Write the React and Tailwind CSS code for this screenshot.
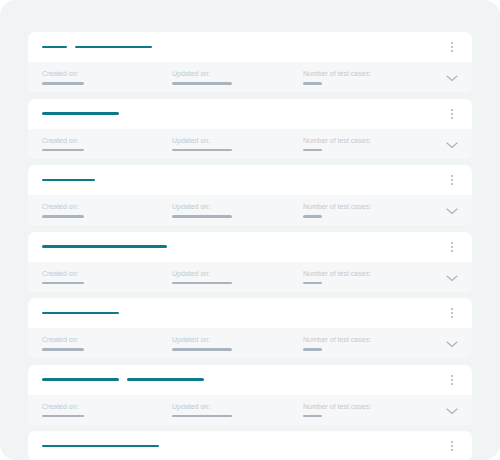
import React from "react";

const cards = [
  [25, 77],
  [77],
  [53],
  [125],
  [77],
  [77, 77],
  [117],
];

function Kebab() {
  return (
    <svg width="4" height="12" viewBox="0 0 4 12" className="block">
      <circle cx="2" cy="2" r="0.9" fill="#9ea8b3" />
      <circle cx="2" cy="6" r="0.9" fill="#9ea8b3" />
      <circle cx="2" cy="10" r="0.9" fill="#9ea8b3" />
    </svg>
  );
}

function Chevron() {
  return (
    <svg width="12" height="7" viewBox="0 0 12 7" className="block">
      <path d="M1 1 L6 5.5 L11 1" fill="none" stroke="#a9b2bc" strokeWidth="1.1" strokeLinecap="round" strokeLinejoin="round" />
    </svg>
  );
}

function Field({ label, bar, className }) {
  return (
    <div className={"flex flex-col gap-[4px] " + className}>
      <span className="text-[7px] leading-[8px] text-[#c3c9cf]">{label}</span>
      <div className="h-[2.5px] rounded-full bg-[#a9b4be]" style={{ width: bar }} />
    </div>
  );
}

function Card({ bars, footer }) {
  return (
    <div className="shrink-0 rounded-[7px] overflow-hidden bg-white">
      <div className="h-[30px] flex items-center pl-[14px] pr-[18px]">
        <div className="flex items-center gap-[8px] flex-1">
          {bars.map((w, i) => (
            <div key={i} className="h-[2.7px] rounded-full bg-[#0d7a8b]" style={{ width: w }} />
          ))}
        </div>
        <Kebab />
      </div>
      {footer && (
        <div className="h-[30px] bg-[#f6f7f8] flex items-start pt-[8px] pl-[14px] pr-[14px]">
          <Field label="Created on:" bar={42} className="w-[130px]" />
          <Field label="Updated on:" bar={60} className="w-[131px]" />
          <Field label="Number of test cases:" bar={19} className="flex-1" />
          <div className="pt-[5px]">
            <Chevron />
          </div>
        </div>
      )}
    </div>
  );
}

export default function App() {
  return (
    <div className="w-[500px] h-[460px] bg-white" style={{ fontFamily: '"Liberation Sans", Arial, sans-serif' }}>
      <div className="w-[500px] h-[460px] rounded-[16px] bg-[#f1f4f5] overflow-hidden pt-[32px] px-[28px] flex flex-col gap-[6.5px]">
        {cards.map((b, i) => (
          <Card key={i} bars={b} footer={i < cards.length - 1} />
        ))}
      </div>
    </div>
  );
}
